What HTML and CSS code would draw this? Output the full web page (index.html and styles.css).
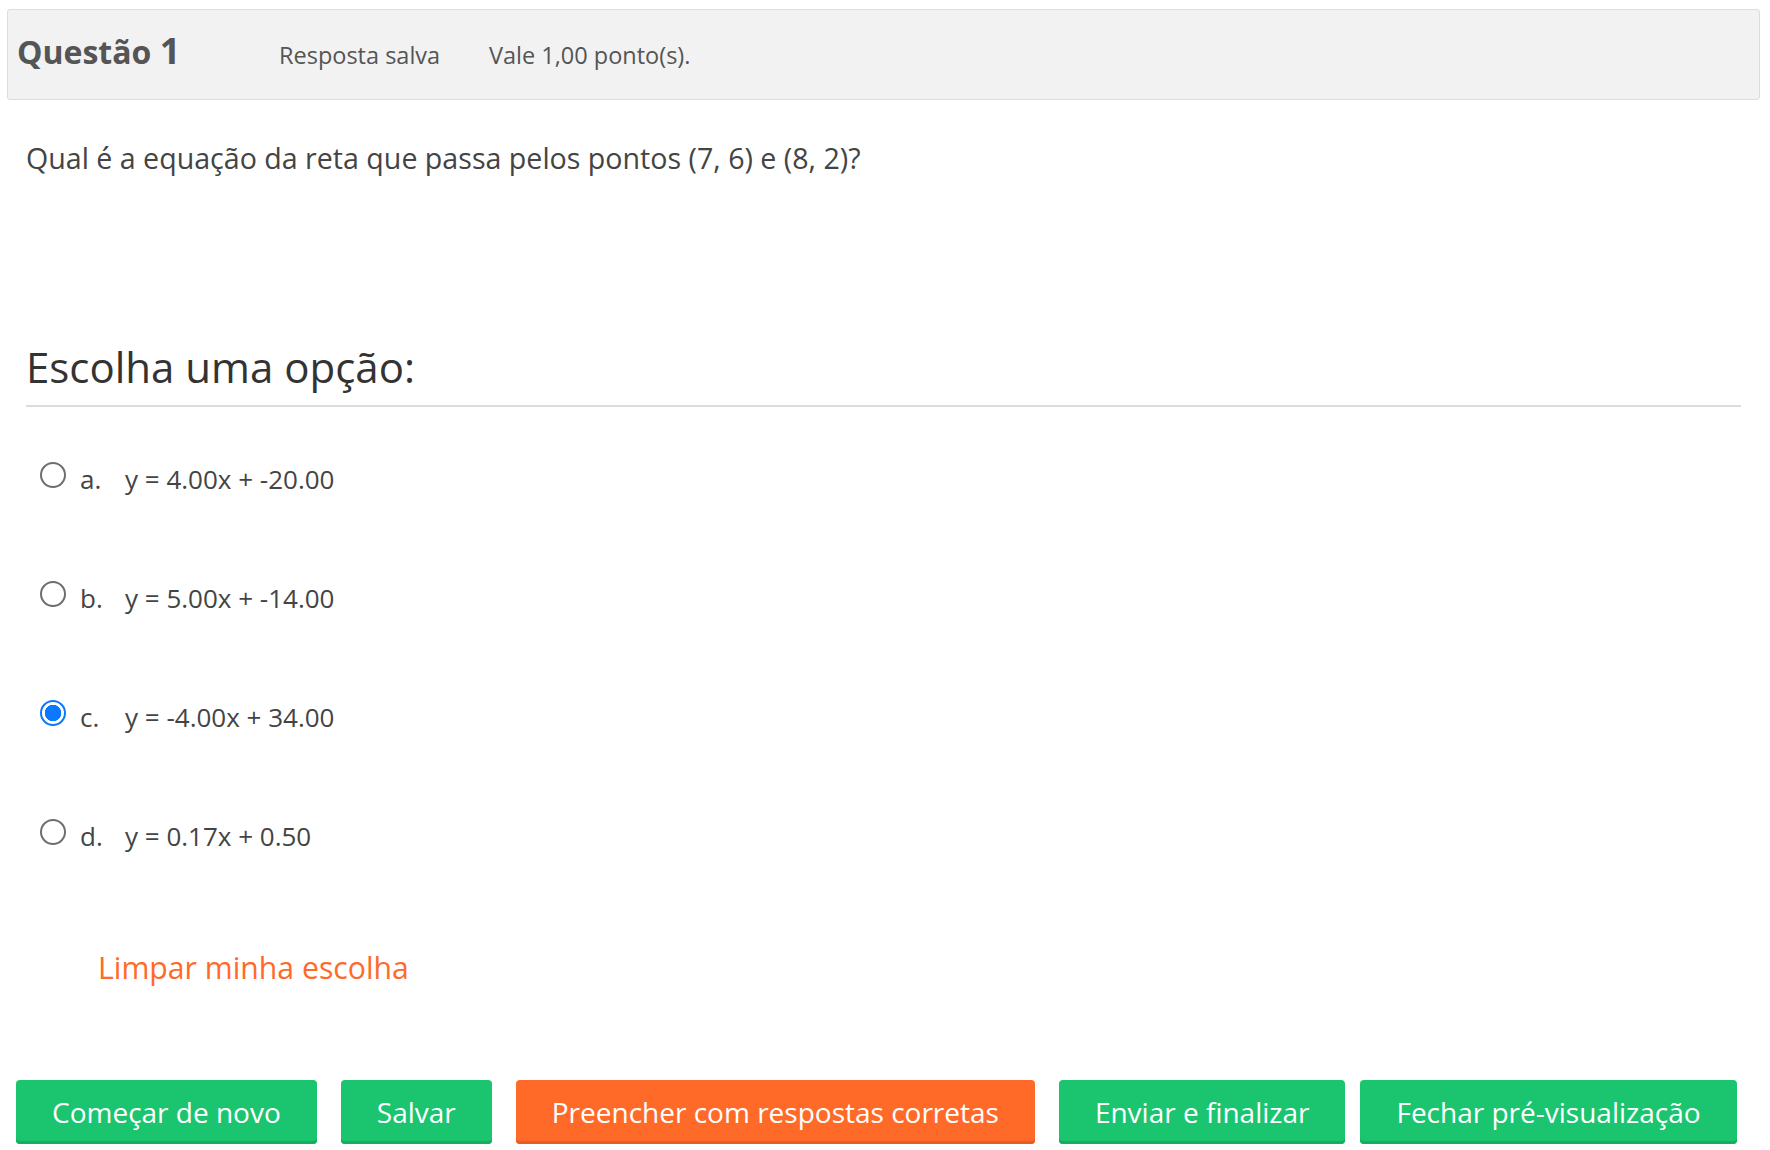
FILE: index.html
```html
<!DOCTYPE html>
<html lang="pt">
<head>
<meta charset="utf-8">
<title>Questão 1</title>
<link rel="stylesheet" href="styles.css">
</head>
<body>
<div class="page">
  <div class="qheader">
    <h3 class="qtitle">Questão <span class="qno">1</span></h3>
    <span class="state">Resposta salva</span>
    <span class="grade">Vale 1,00 ponto(s).</span>
  </div>
  <div class="content">
    <p class="qtext">Qual é a equação da reta que passa pelos pontos (7, 6) e (8, 2)?</p>
    <h4 class="prompt">Escolha uma opção:</h4>
    <div class="answers">
      <label class="option"><span class="radio"></span><span class="letter">a.</span><span class="atext">y = 4.00x + -20.00</span></label>
      <label class="option"><span class="radio"></span><span class="letter">b.</span><span class="atext">y = 5.00x + -14.00</span></label>
      <label class="option"><span class="radio checked"></span><span class="letter">c.</span><span class="atext">y = -4.00x + 34.00</span></label>
      <label class="option"><span class="radio"></span><span class="letter">d.</span><span class="atext">y = 0.17x + 0.50</span></label>
    </div>
    <a class="clear" href="#">Limpar minha escolha</a>
  </div>
  <div class="buttons">
    <button class="btn green b1">Começar de novo</button>
    <button class="btn green b2">Salvar</button>
    <button class="btn orange b3">Preencher com respostas corretas</button>
    <button class="btn green b4">Enviar e finalizar</button>
    <button class="btn green b5">Fechar pré-visualização</button>
  </div>
</div>
</body>
</html>
```
FILE: styles.css
```css
html, body {
  margin: 0;
  padding: 0;
  background: #ffffff;
}
body {
  font-family: "Open Sans", "Liberation Sans", sans-serif;
  color: #444;
}
.page {
  padding: 9px 10px 0 7px;
}
.qheader {
  display: flex;
  align-items: center;
  height: 89px;
  background: #f2f2f2;
  border: 1px solid #dcdcdc;
  border-radius: 3px;
  padding: 0 0 0 9px;
  color: #555;
}
.qtitle {
  margin: 0;
  font-size: 32px;
  font-weight: 700;
  color: #555;
  width: 262px;
  line-height: 1;
  position: relative;
  top: -4px;
}
.qno {
  font-size: 36px;
}
.state {
  font-size: 23.5px;
  width: 210px;
}
.grade {
  font-size: 23.5px;
}
.content {
  padding: 0 19px;
}
.qtext {
  margin: 0;
  padding-top: 36px;
  font-size: 28.6px;
  line-height: 43px;
  color: #444;
}
.prompt {
  margin: 157px 0 0;
  font-size: 42px;
  font-weight: 400;
  line-height: 62px;
  color: #333;
  padding-bottom: 7px;
  border-bottom: 2px solid #dcdcdc;
}
.answers {
  display: flex;
  flex-direction: column;
  gap: 80px;
  padding-top: 52px;
  padding-left: 14px;
}
.option {
  display: flex;
  align-items: center;
  height: 39px;
  font-size: 26px;
  color: #444;
}
.radio {
  box-sizing: border-box;
  width: 26px;
  height: 26px;
  border-radius: 50%;
  border: 2px solid #6e6e6e;
  background: #fff;
  margin-top: -7px;
  margin-right: 14px;
  flex: none;
}
.radio.checked {
  border: 2px solid #0a78ff;
  background: radial-gradient(circle, #0a78ff 0 8px, #fff 8.5px);
}
.letter {
  width: 45px;
}
.clear {
  display: block;
  width: max-content;
  margin: 92px 0 0 72px;
  font-size: 30.2px;
  line-height: 42px;
  color: #ff6a28;
  text-decoration: none;
}
.buttons {
  display: flex;
  gap: 24px;
  margin-top: 91px;
  padding-left: 9px;
}
.btn {
  font-family: "Open Sans", "Liberation Sans", sans-serif;
  font-size: 28px;
  color: #fff;
  height: 64px;
  padding: 0 36px;
  border: none;
  border-radius: 4px;
  cursor: pointer;
}
.green {
  background: #1bc56f;
  box-shadow: inset 0 -3px 0 #17ad61;
}
.orange {
  background: #ff6a28;
  box-shadow: inset 0 -3px 0 #e55d20;
}
.b5 {
  margin-left: -9px;
}
```
